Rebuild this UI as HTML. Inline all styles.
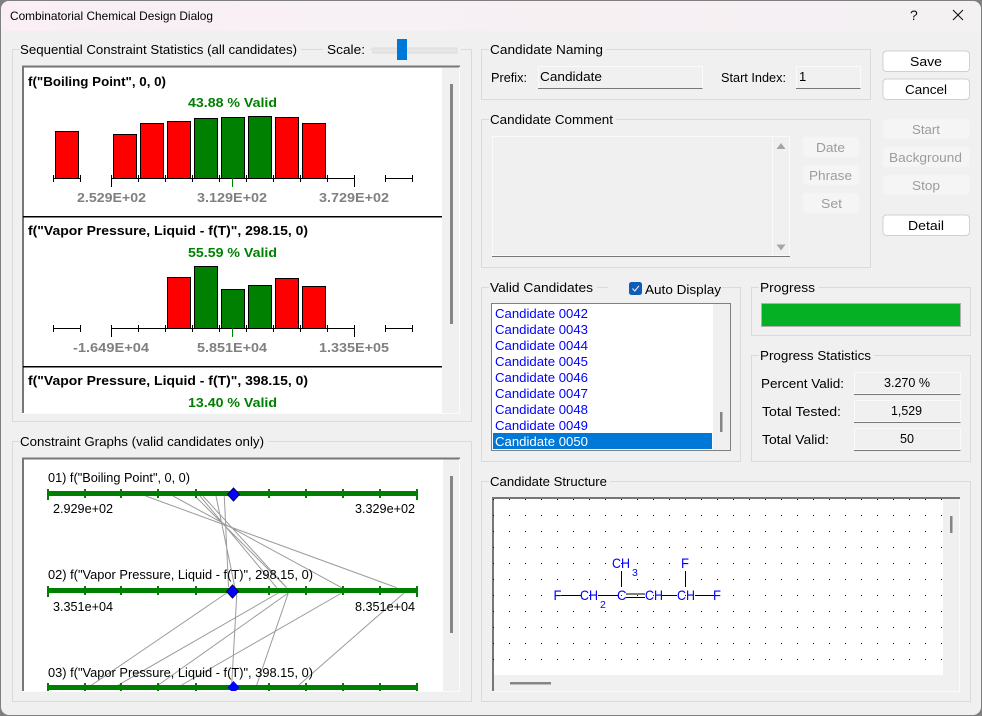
<!DOCTYPE html>
<html><head><meta charset="utf-8"><title>Combinatorial Chemical Design Dialog</title>
<style>
html,body{margin:0;padding:0;background:#808080;width:982px;height:716px;overflow:hidden}
svg{display:block}
text{font-family:"Liberation Sans",sans-serif;font-size:13px;fill:#000;white-space:pre}
.b{font-weight:bold;font-size:13px}
.v{font-weight:bold;font-size:13px;fill:#008000}
.a{font-weight:bold;font-size:13px;fill:#808080}
.d{fill:#9c9c9c}
.m{fill:#0000ff}
.c{fill:#0000ff;font-size:14px}
.s{fill:#0000ff;font-size:10.500px}
.g{fill:none;stroke:#dadada;stroke-width:1}
.bk{stroke:#000;stroke-width:1;fill:none}
.gl{stroke:#9b9b9b;stroke-width:1;fill:none}
.red{fill:#ff0000;stroke:#000;stroke-width:1}
.grn{fill:#008000;stroke:#000;stroke-width:1}
.btn{fill:#fff;stroke:#d0d0d0;stroke-width:1}
.dis{fill:#f5f5f5;stroke:#f2f2f2;stroke-width:1}
</style></head><body>
<svg width="982" height="716" viewBox="0 0 982 716" xmlns="http://www.w3.org/2000/svg">
<defs>
<linearGradient id="tb" x1="0" y1="0" x2="1" y2="0"><stop offset="0" stop-color="#f9eff4"/><stop offset="1" stop-color="#f4f1f3"/></linearGradient>
<pattern id="dots" x="493" y="499" width="16" height="16" patternUnits="userSpaceOnUse"><rect width="1" height="1" fill="#000080"/></pattern>
</defs>
<rect x="0" y="0" width="982" height="716" fill="#7f7f7f"/>
<rect x="1" y="1" width="980" height="714" rx="8" fill="#f0f0f0"/>
<path d="M1 31V9a8 8 0 0 1 8-8H973a8 8 0 0 1 8 8V31Z" fill="url(#tb)"/>
<text x="10" y="20" style="font-size:12px" textLength="203" lengthAdjust="spacingAndGlyphs">Combinatorial Chemical Design Dialog</text>
<text x="910" y="20" style="font-size:14px;fill:#111">?</text>
<path d="M953 10L963 20M963 10L953 20" stroke="#111" stroke-width="1.100" fill="none"/>

<!-- group 1 -->
<path class="g" d="M19.500 49.500H12.500V421.500H471.500V49.500H461M301 49.500H323M370 49.500H372" />
<text x="20" y="54" textLength="277" lengthAdjust="spacingAndGlyphs">Sequential Constraint Statistics (all candidates)</text>
<text x="327" y="54" textLength="38" lengthAdjust="spacingAndGlyphs">Scale:</text>
<rect x="373" y="48" width="84" height="5" fill="#e6e6e6" stroke="#dcdcdc"/>
<rect x="397" y="39" width="10" height="21" fill="#0078d7"/>

<rect x="22" y="66" width="438" height="347" fill="#f0f0f0"/>
<rect x="23" y="68" width="419" height="345" fill="#fff"/>
<path d="M23 413V66.500H460" stroke="#777" stroke-width="2" fill="none"/>
<path d="M459.500 67V413.500H22" stroke="#fbfbfb" stroke-width="1" fill="none"/>
<rect x="450" y="84" width="3" height="240" fill="#858585"/>
<rect x="23" y="216" width="419" height="1.500" fill="#000"/>
<rect x="23" y="366" width="419" height="1.500" fill="#000"/>

<text class="b" x="28" y="86" textLength="138" lengthAdjust="spacingAndGlyphs">f("Boiling Point", 0, 0)</text>
<text class="v" x="188" y="107" textLength="89" lengthAdjust="spacingAndGlyphs">43.88 % Valid</text>
<g>
<rect class="red" x="55.500" y="131.500" width="23" height="47"/>
<rect class="red" x="113.500" y="134.500" width="23" height="44"/>
<rect class="red" x="140.500" y="123.500" width="23" height="55"/>
<rect class="red" x="167.500" y="121.500" width="23" height="57"/>
<rect class="grn" x="194.500" y="118.500" width="23" height="60"/>
<rect class="grn" x="221.500" y="117.500" width="23" height="61"/>
<rect class="grn" x="248.500" y="116.500" width="23" height="62"/>
<rect class="red" x="275.500" y="117.500" width="23" height="61"/>
<rect class="red" x="302.500" y="123.500" width="23" height="55"/>
</g>
<path class="bk" d="M53.500 178.500H80.500M53.500 175V182M80.500 175V182M111.500 178.500H354.500M111.500 175V187M138.500 175V182M165.500 175V182M192.500 175V182M219.500 175V182M246.500 175V182M273.500 175V182M300.500 175V182M327.500 175V182M354.500 175V187M385.500 178.500H412.500M385.500 175V182M412.500 175V182"/>
<path d="M232.500 178V187" stroke="#008000" fill="none"/>
<text class="a" x="77" y="202" textLength="69" lengthAdjust="spacingAndGlyphs">2.529E+02</text>
<text class="a" x="197" y="202" textLength="70" lengthAdjust="spacingAndGlyphs">3.129E+02</text>
<text class="a" x="319" y="202" textLength="70" lengthAdjust="spacingAndGlyphs">3.729E+02</text>

<text class="b" x="28" y="235" textLength="280" lengthAdjust="spacingAndGlyphs">f("Vapor Pressure, Liquid - f(T)", 298.15, 0)</text>
<text class="v" x="188" y="257" textLength="89" lengthAdjust="spacingAndGlyphs">55.59 % Valid</text>
<rect class="red" x="167.500" y="277.500" width="23" height="51"/>
<rect class="grn" x="194.500" y="266.500" width="23" height="62"/>
<rect class="grn" x="221.500" y="289.500" width="23" height="39"/>
<rect class="grn" x="248.500" y="285.500" width="23" height="43"/>
<rect class="red" x="275.500" y="278.500" width="23" height="50"/>
<rect class="red" x="302.500" y="286.500" width="23" height="42"/>
<path class="bk" d="M53.500 328.500H80.500M53.500 325V332M80.500 325V332M111.500 328.500H354.500M111.500 325V337M138.500 325V332M165.500 325V332M192.500 325V332M219.500 325V332M246.500 325V332M273.500 325V332M300.500 325V332M327.500 325V332M354.500 325V337M385.500 328.500H412.500M385.500 325V332M412.500 325V332"/>
<path d="M232.500 328V337" stroke="#008000" fill="none"/>
<text class="a" x="73" y="352" textLength="76" lengthAdjust="spacingAndGlyphs">-1.649E+04</text>
<text class="a" x="197" y="352" textLength="70" lengthAdjust="spacingAndGlyphs">5.851E+04</text>
<text class="a" x="319" y="352" textLength="70" lengthAdjust="spacingAndGlyphs">1.335E+05</text>

<text class="b" x="28" y="385" textLength="280" lengthAdjust="spacingAndGlyphs">f("Vapor Pressure, Liquid - f(T)", 398.15, 0)</text>
<text class="v" x="188" y="407" textLength="89" lengthAdjust="spacingAndGlyphs">13.40 % Valid</text>

<!-- group 2 -->
<path class="g" d="M19.500 441.500H12.500V701.500H471.500V441.500H268"/>
<text x="20" y="446" textLength="244" lengthAdjust="spacingAndGlyphs">Constraint Graphs (valid candidates only)</text>
<rect x="22" y="458" width="438" height="233" fill="#f0f0f0"/>
<rect x="23" y="459" width="420" height="232" fill="#fff"/>
<path d="M23 691V458.500H460" stroke="#777" stroke-width="2" fill="none"/>
<path d="M459.500 459V691.500H22" stroke="#fbfbfb" stroke-width="1" fill="none"/>
<rect x="450" y="476" width="3" height="157" fill="#858585"/>

<g class="gl">
<path d="M145.700 496L396.700 587.700M173 496L341.700 587.700M195 496L286.700 587.700M200 496L276.700 587.700M203 496L286.700 587.700M216 496L236.700 596M224.300 496L228.500 587"/>
<path d="M226.700 593L91.700 685M278.300 593L118.300 685M288.300 593L158.300 685M341.700 593L181.700 685M288.300 593L256.700 685M404 593L299 685M236.700 596L231.700 685"/>
</g>

<text x="48" y="482" textLength="142" lengthAdjust="spacingAndGlyphs">01) f("Boiling Point", 0, 0)</text>
<text x="53" y="513" textLength="60" lengthAdjust="spacingAndGlyphs">2.929e+02</text>
<text x="355" y="513" textLength="60" lengthAdjust="spacingAndGlyphs">3.329e+02</text>
<text x="48" y="579" textLength="265" lengthAdjust="spacingAndGlyphs">02) f("Vapor Pressure, Liquid - f(T)", 298.15, 0)</text>
<text x="53" y="611" textLength="60" lengthAdjust="spacingAndGlyphs">3.351e+04</text>
<text x="355" y="611" textLength="60" lengthAdjust="spacingAndGlyphs">8.351e+04</text>
<text x="48" y="677" textLength="265" lengthAdjust="spacingAndGlyphs">03) f("Vapor Pressure, Liquid - f(T)", 398.15, 0)</text>

<g fill="#008000">
<rect x="48" y="491" width="369" height="5"/><rect x="48" y="588" width="369" height="5"/><rect x="48" y="685" width="369" height="5"/>
<path d="M47 489h2v11h-2zM84 489h2v9h-2zM120 489h2v9h-2zM157 489h2v9h-2zM195 489h2v9h-2zM268 489h2v9h-2zM305 489h2v9h-2zM342 489h2v9h-2zM379 489h2v9h-2zM416 489h2v11h-2z"/>
<path d="M47 586h2v11h-2zM84 586h2v9h-2zM120 586h2v9h-2zM157 586h2v9h-2zM195 586h2v9h-2zM268 586h2v9h-2zM305 586h2v9h-2zM342 586h2v9h-2zM379 586h2v9h-2zM416 586h2v11h-2z"/>
<path d="M47 683h2v8h-2zM84 683h2v8h-2zM120 683h2v8h-2zM157 683h2v8h-2zM195 683h2v8h-2zM268 683h2v8h-2zM305 683h2v8h-2zM342 683h2v8h-2zM379 683h2v8h-2zM416 683h2v8h-2z"/>
</g>
<path d="M233.500 488L239.500 494.500L233.500 501L227.500 494.500Z" fill="#0000ff" stroke="#000040"/>
<path d="M232.500 585L238.500 591.500L232.500 598L226.500 591.500Z" fill="#0000ff" stroke="#000040"/>
<path d="M233.500 681L239.500 687.500L236 691H231L227.500 687.500Z" fill="#0000ff"/>
<rect x="23" y="691" width="437" height="1" fill="#fbfbfb"/>

<!-- Candidate naming -->
<path class="g" d="M489 49.500H481.500V99.500H870.500V49.500H606"/>
<text x="490" y="54" textLength="113" lengthAdjust="spacingAndGlyphs">Candidate Naming</text>
<text x="491" y="82" textLength="36" lengthAdjust="spacingAndGlyphs">Prefix:</text>
<rect x="538.500" y="66.500" width="164" height="22" fill="#f0f0f0" stroke="#fafafa"/>
<rect x="538" y="88" width="164.500" height="1" fill="#777"/>
<text x="540" y="81" textLength="62" lengthAdjust="spacingAndGlyphs">Candidate</text>
<text x="721" y="82" textLength="65" lengthAdjust="spacingAndGlyphs">Start Index:</text>
<rect x="796.500" y="66.500" width="64" height="22" fill="#f0f0f0" stroke="#fafafa"/>
<rect x="796" y="88" width="64.500" height="1" fill="#777"/>
<text x="799" y="81">1</text>

<!-- Candidate comment -->
<path class="g" d="M489 119.500H481.500V267.500H870.500V119.500H616"/>
<text x="490" y="124" textLength="123" lengthAdjust="spacingAndGlyphs">Candidate Comment</text>
<rect x="492.500" y="136.500" width="297" height="119" fill="#f0f0f0" stroke="#fafafa"/>
<path d="M772.500 137V255" stroke="#fafafa"/>
<rect x="492" y="256" width="298" height="1" fill="#777"/>
<path d="M781 143L785.500 149H776.500Z M776.500 244.500H785.500L781 250.500Z" fill="#a6a6a6"/>
<rect class="dis" x="803" y="137" width="56" height="20" rx="3"/>
<rect class="dis" x="803" y="165" width="56" height="20" rx="3"/>
<rect class="dis" x="803" y="193" width="56" height="20" rx="3"/>
<text class="d" x="816" y="152" textLength="29" lengthAdjust="spacingAndGlyphs">Date</text>
<text class="d" x="809" y="180" textLength="43" lengthAdjust="spacingAndGlyphs">Phrase</text>
<text class="d" x="821" y="208" textLength="21" lengthAdjust="spacingAndGlyphs">Set</text>

<!-- Right buttons -->
<rect class="btn" x="883" y="51" width="86.500" height="20.500" rx="3.500"/>
<rect class="btn" x="883" y="79" width="86.500" height="20.500" rx="3.500"/>
<rect class="dis" x="883" y="119" width="86.500" height="20" rx="3"/>
<rect class="dis" x="883" y="147" width="86.500" height="20" rx="3"/>
<rect class="dis" x="883" y="175" width="86.500" height="20" rx="3"/>
<rect class="btn" x="883" y="215" width="86.500" height="20.500" rx="3.500"/>
<text x="910" y="66" textLength="32" lengthAdjust="spacingAndGlyphs">Save</text>
<text x="905" y="94" textLength="42" lengthAdjust="spacingAndGlyphs">Cancel</text>
<text class="d" x="912" y="134" textLength="28" lengthAdjust="spacingAndGlyphs">Start</text>
<text class="d" x="889" y="162" textLength="73" lengthAdjust="spacingAndGlyphs">Background</text>
<text class="d" x="912" y="190" textLength="28" lengthAdjust="spacingAndGlyphs">Stop</text>
<text x="908" y="230" textLength="36" lengthAdjust="spacingAndGlyphs">Detail</text>

<!-- Valid candidates -->
<path class="g" d="M489 287.500H481.500V461.500H740.500V287.500H722M597 287.500H608"/>
<text x="490" y="292" textLength="103" lengthAdjust="spacingAndGlyphs">Valid Candidates</text>
<rect x="629" y="282" width="13" height="13" rx="2.500" fill="#0f5cb8"/>
<path d="M632.500 288.500L634.800 291L639 285.800" stroke="#e8f0fb" stroke-width="1.100" fill="none"/>
<text x="645" y="294" textLength="76" lengthAdjust="spacingAndGlyphs">Auto Display</text>
<rect x="491.500" y="303.500" width="239" height="147" fill="#fff" stroke="#808080"/>
<rect x="713" y="304" width="17" height="146" fill="#f0f0f0"/>
<rect x="720" y="412" width="2.500" height="20" fill="#858585"/>
<rect x="493" y="433" width="219" height="16" fill="#0078d7"/>
<g>
<text class="m" x="495" y="318" textLength="93" lengthAdjust="spacingAndGlyphs">Candidate 0042</text>
<text class="m" x="495" y="334" textLength="93" lengthAdjust="spacingAndGlyphs">Candidate 0043</text>
<text class="m" x="495" y="350" textLength="93" lengthAdjust="spacingAndGlyphs">Candidate 0044</text>
<text class="m" x="495" y="366" textLength="93" lengthAdjust="spacingAndGlyphs">Candidate 0045</text>
<text class="m" x="495" y="382" textLength="93" lengthAdjust="spacingAndGlyphs">Candidate 0046</text>
<text class="m" x="495" y="398" textLength="93" lengthAdjust="spacingAndGlyphs">Candidate 0047</text>
<text class="m" x="495" y="414" textLength="93" lengthAdjust="spacingAndGlyphs">Candidate 0048</text>
<text class="m" x="495" y="430" textLength="93" lengthAdjust="spacingAndGlyphs">Candidate 0049</text>
<text x="495" y="446" textLength="93" lengthAdjust="spacingAndGlyphs" style="fill:#fff">Candidate 0050</text>
</g>

<!-- Progress -->
<path class="g" d="M759 287.500H751.500V335.500H970.500V287.500H819"/>
<text x="760" y="292" textLength="55" lengthAdjust="spacingAndGlyphs">Progress</text>
<rect x="761.500" y="303.500" width="199" height="23" fill="#06b025" stroke="#b0b0b0"/>

<path class="g" d="M759 355.500H751.500V461.500H970.500V355.500H874"/>
<text x="760" y="360" textLength="111" lengthAdjust="spacingAndGlyphs">Progress Statistics</text>
<text x="761" y="388" textLength="83" lengthAdjust="spacingAndGlyphs">Percent Valid:</text>
<text x="762" y="416" textLength="79" lengthAdjust="spacingAndGlyphs">Total Tested:</text>
<text x="762" y="444" textLength="67" lengthAdjust="spacingAndGlyphs">Total Valid:</text>
<rect x="854.500" y="372.500" width="106" height="21" fill="#f0f0f0" stroke="#fafafa"/><rect x="854" y="394" width="106.500" height="1" fill="#777"/>
<rect x="854.500" y="400.500" width="106" height="21" fill="#f0f0f0" stroke="#fafafa"/><rect x="854" y="422" width="106.500" height="1" fill="#777"/>
<rect x="854.500" y="428.500" width="106" height="21" fill="#f0f0f0" stroke="#fafafa"/><rect x="854" y="450" width="106.500" height="1" fill="#777"/>
<text x="884" y="387" textLength="46" lengthAdjust="spacingAndGlyphs">3.270 %</text>
<text x="891" y="415" textLength="31" lengthAdjust="spacingAndGlyphs">1,529</text>
<text x="900" y="443" textLength="14" lengthAdjust="spacingAndGlyphs">50</text>

<!-- Candidate structure -->
<path class="g" d="M489 481.500H481.500V701.500H970.500V481.500H610"/>
<text x="490" y="486" textLength="117" lengthAdjust="spacingAndGlyphs">Candidate Structure</text>
<rect x="492" y="498" width="468" height="193" fill="#f0f0f0"/>
<rect x="493" y="499" width="450" height="176" fill="#fff"/>
<path d="M493 691V498H960" stroke="#777" stroke-width="2" fill="none"/>
<path d="M959.500 499V691.500H492" stroke="#fbfbfb" fill="none"/>
<rect x="493" y="499" width="449" height="161" fill="url(#dots)"/>
<rect x="950" y="516" width="2.500" height="17" fill="#858585"/>
<rect x="510" y="682" width="41" height="2.500" fill="#858585"/>

<path class="bk" d="M561 595.500H581M598 595.500H618M626 594H645M626 597.500H645M662 595.500H677M695 595.500H714M621.500 571V587M685.500 571V587"/>
<text class="c" x="553.500" y="600" textLength="8" lengthAdjust="spacingAndGlyphs">F</text>
<text class="c" x="580" y="600" textLength="18" lengthAdjust="spacingAndGlyphs">CH</text>
<text class="s" x="600" y="608">2</text>
<text class="c" x="617" y="600" textLength="9.500" lengthAdjust="spacingAndGlyphs">C</text>
<text class="c" x="645" y="600" textLength="18" lengthAdjust="spacingAndGlyphs">CH</text>
<text class="c" x="677" y="600" textLength="18" lengthAdjust="spacingAndGlyphs">CH</text>
<text class="c" x="713" y="600" textLength="8" lengthAdjust="spacingAndGlyphs">F</text>
<text class="c" x="612" y="568" textLength="18" lengthAdjust="spacingAndGlyphs">CH</text>
<text class="s" x="632" y="576">3</text>
<text class="c" x="681" y="568" textLength="8" lengthAdjust="spacingAndGlyphs">F</text>
</svg>
</body></html>
